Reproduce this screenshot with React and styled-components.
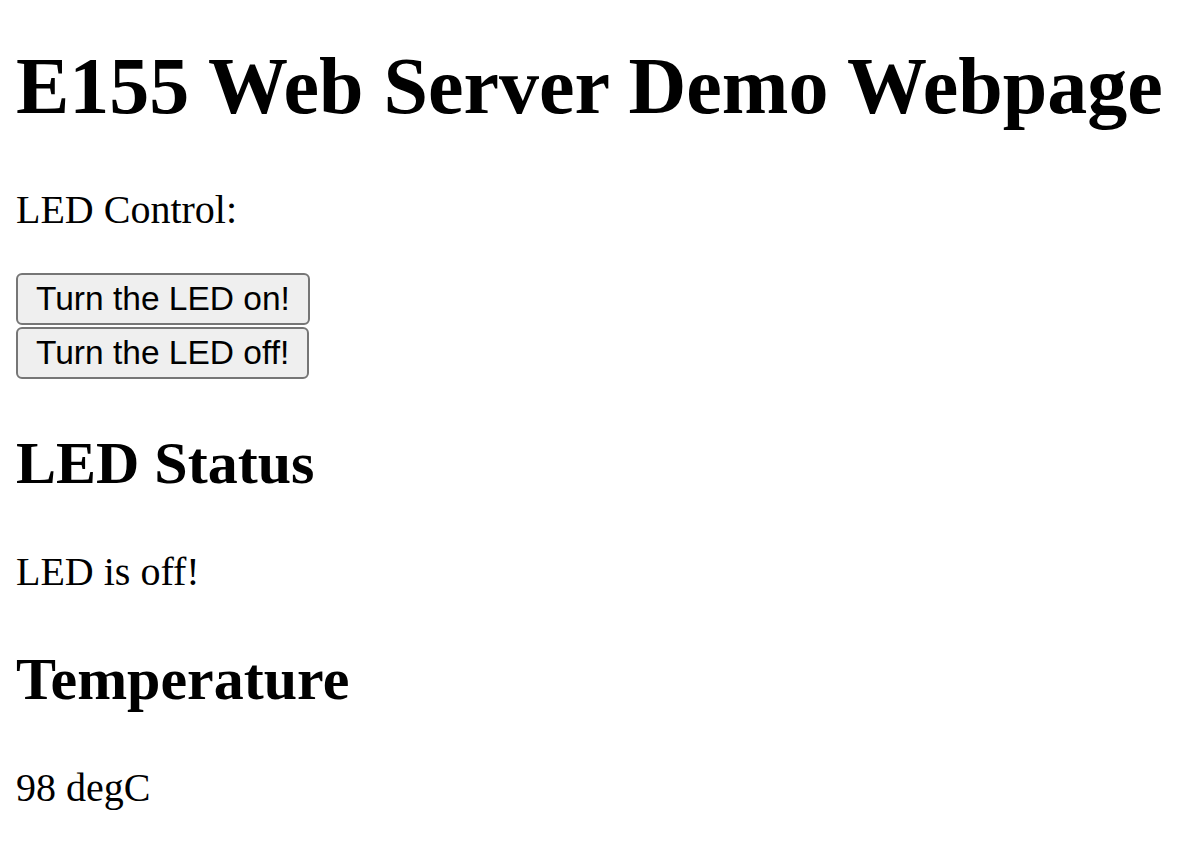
import React from 'react';
import styled, { createGlobalStyle } from 'styled-components';

const GlobalStyle = createGlobalStyle`
    html, body {
        margin: 0;
        padding: 0;
        background: #ffffff;
    }
`;

const Page = styled.div`
    padding: 41px 16px 20px;
    font-family: "Liberation Serif", "Times New Roman", serif;
    color: #000000;
`;

const Title = styled.h1`
    font-size: 80px;
    font-weight: bold;
    margin: 0 0 54px;
`;

const Heading = styled.h2`
    font-size: 60px;
    font-weight: bold;
    margin: 50px 0;
`;

const Text = styled.p`
    font-size: 40px;
    margin: ${(props) => (props.tight ? '54px 0 40px' : '50px 0')};
`;

const Controls = styled.form`
    display: flex;
    flex-direction: column;
    align-items: flex-start;
    gap: 2px;
    margin: 0;
`;

const Button = styled.button`
    height: 52px;
    padding: 0 18px;
    border: 2px solid #767676;
    border-radius: 6px;
    background-color: #efefef;
    color: #000000;
    font-family: "Liberation Sans", Arial, sans-serif;
    font-size: 33.5px;
    line-height: 1;
    cursor: pointer;
`;

export default function App() {
    return (
        <Page>
            <GlobalStyle />
            <Title>E155 Web Server Demo Webpage</Title>
            <Text tight>LED Control:</Text>
            <Controls onSubmit={(e) => e.preventDefault()}>
                <Button type="submit" name="led" value="on">Turn the LED on!</Button>
                <Button type="submit" name="led" value="off">Turn the LED off!</Button>
            </Controls>
            <Heading>LED Status</Heading>
            <Text>LED is off!</Text>
            <Heading>Temperature</Heading>
            <Text>98 degC</Text>
        </Page>
    );
}
